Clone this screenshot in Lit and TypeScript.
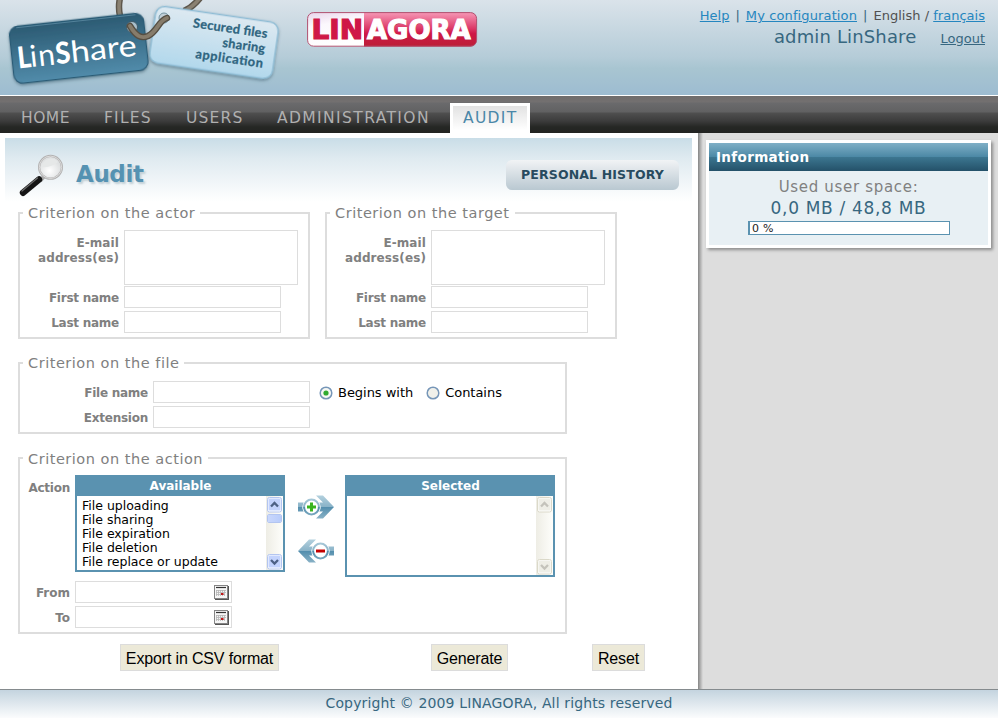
import { LitElement, html, svg, css } from "lit";
import { customElement, property } from "lit/decorators.js";
import { classMap } from "lit/directives/class-map.js";

/** Brand tags hanging from a rope, plus the company badge. */
@customElement("brand-logos")
class BrandLogos extends LitElement {
  static styles = css`
    :host { display: flex; align-items: flex-start; gap: 17px; }
    svg { display: block; }
    .badge { margin-top: 12px; }
    .geo { font-family: Lato, "Open Sans", sans-serif; }
    .heavy { font-family: "DejaVu Sans", sans-serif; font-weight: bold; font-size: 26.5px; }
    .tag { font-weight: 700; font-size: 12.8px; fill: #2f6580; stroke: #2f6580; stroke-width: 0.3px; text-anchor: end; }
  `;
  render() {
    return html`
      <svg width="290" height="95" viewBox="0 0 290 95">
        <defs>
          <linearGradient id="dark" x1="0" y1="0" x2="0" y2="1">
            <stop offset="0" stop-color="#2b5a72" /><stop offset="1" stop-color="#518baa" />
          </linearGradient>
          <linearGradient id="pale" x1="0" y1="0" x2="0" y2="1">
            <stop offset="0" stop-color="#dde9f1" /><stop offset="1" stop-color="#b2d8ec" />
          </linearGradient>
          <filter id="sh" x="-10%" y="-20%" width="120%" height="150%">
            <feDropShadow dx="0" dy="1.5" stdDeviation="1.5" flood-color="#3c5a6c" flood-opacity=".6" />
          </filter>
        </defs>
        <path d="M120 -2 Q118 7 120 16" fill="none" stroke="#5d564b" stroke-width="6.5" />
        <path d="M120 -2 Q118 7 120 16" fill="none" stroke="#8a8172" stroke-width="3.6" />
        <path d="M184 11 Q193 7 200 -2" fill="none" stroke="#5d564b" stroke-width="6.5" />
        <path d="M184 11 Q193 7 200 -2" fill="none" stroke="#8a8172" stroke-width="3.6" />
        <g transform="translate(214 42.5) rotate(8.3)">
          <rect x="-62" y="-28.5" width="124" height="57" rx="9" fill="url(#pale)" stroke="#8fbdd5" stroke-width="1.4" filter="url(#sh)" />
          <text class="geo tag" x="51.5" y="-12" textLength="75">Secured files</text>
          <text class="geo tag" x="51.5" y="3" textLength="43">sharing</text>
          <text class="geo tag" x="51.5" y="18" textLength="68">application</text>
        </g>
        <g transform="translate(78.8 48.3) rotate(-6.2)">
          <rect x="-67.5" y="-28.7" width="135" height="57.4" rx="9" fill="url(#dark)" stroke="#2a5b76" stroke-width="1.2" filter="url(#sh)" />
          <path d="M-60 -27.2H60" stroke="#6e9bb3" stroke-width="1" opacity=".6" />
          <g fill="#fff" class="geo" font-size="30">
            <text x="-62" y="13.5" font-weight="900" textLength="13.5" lengthAdjust="spacingAndGlyphs">L</text>
            <text x="-49.5" y="13.5" textLength="25">in</text>
            <text x="-24" y="13.5" font-weight="900" textLength="15" lengthAdjust="spacingAndGlyphs">S</text>
            <text x="-8.5" y="13.5" textLength="66" lengthAdjust="spacingAndGlyphs">hare</text>
          </g>
        </g>
        <circle cx="132" cy="27" r="5.5" fill="#a9bfcb" stroke="#3f5b69" />
        <circle cx="164" cy="18" r="5" fill="#c0ced6" stroke="#73929f" />
        <path d="M130 26 C136 36 141 39 148 36 C158 31 158 21 167 18" fill="none" stroke="#564f43" stroke-width="6.5" stroke-linecap="round" />
        <path d="M130 26 C136 36 141 39 148 36 C158 31 158 21 167 18" fill="none" stroke="#867c6b" stroke-width="3.8" stroke-linecap="round" />
      </svg>
      <svg class="badge" width="171" height="36" viewBox="0 0 171 36">
        <defs>
          <linearGradient id="red" x1="0" y1="0" x2="0" y2="1">
            <stop offset="0" stop-color="#f79ab8" /><stop offset=".45" stop-color="#dc3a68" />
            <stop offset=".6" stop-color="#cf1746" /><stop offset="1" stop-color="#b92036" />
          </linearGradient>
          <linearGradient id="white" x1="0" y1="0" x2=".3" y2="1">
            <stop offset="0" stop-color="#e8d3ea" /><stop offset=".4" stop-color="#fbf8fd" /><stop offset="1" stop-color="#fff" />
          </linearGradient>
          <clipPath id="round"><rect x=".5" y=".5" width="169" height="34" rx="6" /></clipPath>
        </defs>
        <g clip-path="url(#round)">
          <rect width="57" height="36" fill="url(#white)" />
          <rect x="57" width="114" height="36" fill="url(#red)" />
        </g>
        <rect x=".6" y=".6" width="169" height="33.6" rx="6" fill="none" stroke="#b0506f" />
        <text class="heavy" x="4.5" y="27" fill="#cf1746" stroke="#cf1746" stroke-width="1.2" textLength="51.5" lengthAdjust="spacingAndGlyphs">LIN</text>
        <text class="heavy" x="60.5" y="28" fill="#8b1230" opacity=".7" textLength="103" lengthAdjust="spacingAndGlyphs" aria-hidden="true">AGORA</text>
        <text class="heavy" x="60" y="27" fill="#fff" stroke="#fff" stroke-width="1.2" textLength="103.5" lengthAdjust="spacingAndGlyphs">AGORA</text>
      </svg>`;
  }
}

/** Titled list box with a classic scroll bar. */
@customElement("list-box")
class ListBox extends LitElement {
  @property() heading = "";
  @property({ type: Array }) items: string[] = [];
  @property({ type: Boolean, reflect: true }) disabled = false;

  static styles = css`
    :host { display: block; width: 210px; font-family: "DejaVu Sans", sans-serif; }
    .box { display: flex; flex-direction: column; height: 97px; box-sizing: border-box; border: 2px solid #5a92b0; border-top: 0; background: #fff; }
    .box.tall { height: 102px; }
    .head { height: 21px; line-height: 23px; padding-left: 1px; background: #5a92b0; color: #fff; font-weight: bold; font-size: 12px; text-align: center; }
    .body { flex: 1; display: flex; min-height: 0; }
    ul { flex: 1; margin: 0; padding: 3px 0 0 5px; list-style: none; font-size: 12.5px; line-height: 14px; color: #000; white-space: nowrap; }
    .bar { width: 17px; box-sizing: border-box; background: linear-gradient(90deg, #eeede5, #fefefb); display: flex; flex-direction: column; align-items: center; justify-content: space-between; }
    svg { display: block; }
    .thumb { width: 15px; height: 9px; box-sizing: border-box; border: 1px solid #fff; border-radius: 2px; background: linear-gradient(90deg, #c9d7fc, #b8ccfb); outline: 1px solid #b3c5f0; outline-offset: -1px; margin-top: 1px; }
    .fill { flex: 1; }
  `;

  private arrow(up: boolean) {
    const face = this.disabled ? "#eeeee6" : "#c3d3fd";
    const rim = this.disabled ? "#dbd9c9" : "#b3c5f0";
    const mark = this.disabled ? "#c4c3bb" : "#4d6185";
    return svg`<svg width="17" height="17" viewBox="0 0 17 17">
      <rect x="1.5" y="1.5" width="14" height="14.5" rx="2" fill="#fff" stroke=${rim} />
      <rect x="2.5" y="2.5" width="12" height="12" rx="1" fill=${face} />
      <path d=${up ? "M5 10.5 8.5 7 12 10.5" : "M5 7 8.5 10.5 12 7"} fill="none" stroke=${mark} stroke-width="2.3" />
    </svg>`;
  }

  render() {
    return html`<div class=${classMap({ box: true, tall: this.disabled })}>
      <div class="head">${this.heading}</div>
      <div class="body">
        <ul>${this.items.map((i) => html`<li>${i}</li>`)}</ul>
        <div class="bar">
          ${this.arrow(true)}
          ${this.disabled ? "" : html`<div class="thumb"></div>`}
          <div class="fill"></div>
          ${this.arrow(false)}
        </div>
      </div>
    </div>`;
  }
}

@customElement("app-root")
class AppRoot extends LitElement {
  static styles = css`
    :host { display: flex; flex-direction: column; width: 998px; height: 718px; overflow: hidden; font-family: "DejaVu Sans", sans-serif; font-size: 13px; color: #808080; background: #fff; }
    * { box-sizing: border-box; }
    header { display: flex; justify-content: space-between; height: 96px; border-bottom: 1px solid #fff; background: linear-gradient(#dae3ea, #b5ccd8 60%, #a8c5d1 72%, #9dbcd1); }
    .user { padding: 7px 13px 0 0; text-align: right; color: #376780; }
    .links { display: flex; justify-content: flex-end; gap: 6px; height: 17px; line-height: 17px; }
    .links .conf { letter-spacing: 0.12px; }
    .links .langs { letter-spacing: 0.02px; }
    .who { display: flex; justify-content: flex-end; align-items: center; gap: 24px; height: 26px; line-height: 26px; }
    .name { font-size: 18px; letter-spacing: 0.15px; }
    a { color: #2586bf; text-decoration: underline; }
    .logout { color: #376780; padding-top: 3px; }
    .lang { color: #505050; }
    nav { display: grid; grid-template-columns: 83px 82px 91px 173px 80px; align-items: end; height: 37px; padding-left: 21px; background: linear-gradient(#6f6c6c 0, #737070 6px, #6a6a6c 7px, #616162 16px, #4f4f4f 17px, #3c3c3c 25px, #252724 31px, #222321); color: #b0b0b0; font-size: 15.5px; letter-spacing: 0.5px; }
    nav span { height: 30px; line-height: 30px; white-space: nowrap; }
    nav .mid-gap { letter-spacing: 1.2px; }
    nav .wide { letter-spacing: 1.4px; }
    nav .on { letter-spacing: 1.3px; color: #4a87a8; border: 3px solid #fff; border-bottom: 0; background: linear-gradient(#e2e2e2, #fff 90%); padding-left: 10px; line-height: 24px; }
    .mid { display: flex; height: 556px; background: #dddddd; }
    main { width: 698px; background: #fff; padding: 5px 6px 0 5px; }
    .edge { width: 5px; background: linear-gradient(90deg, #858585, #a9a9a9 40%, #d4d4d4 90%, #ddd); }
    .panel { padding: 0 13px; background: linear-gradient(#c9dde7, #dfeaf0 20px, #fff 64px); }
    .top { display: flex; align-items: flex-start; height: 67px; }
    .lens { margin: 14px 0 0 0; }
    h1 { margin: 21px auto 0 10px; font-size: 23px; line-height: 30px; letter-spacing: -0.4px; color: #5592b2; text-shadow: 2px 2px 2px #c3d0d7; }
    .history { margin-top: 22px; width: 173px; height: 30px; border: 0; border-radius: 6px; background: linear-gradient(#f1f3f5, #b9c8d1); color: #284b5f; font: bold 12.5px "DejaVu Sans", sans-serif; line-height: 28px; letter-spacing: 0.15px; padding: 0 0 1px; white-space: nowrap; }
    form { display: flex; flex-direction: column; gap: 16px; }
    .pair { display: flex; gap: 15px; }
    fieldset { margin: 0; padding: 9px 0 0; border: 2px solid #dddddd; width: 549px; height: 79px; min-width: 0; }
    .pair fieldset { width: 292px; height: 134px; }
    fieldset.action { height: 184px; }
    legend { margin-left: 3px; padding: 0 5px; height: 16px; line-height: 16px; font-size: 14.5px; letter-spacing: 0.52px; white-space: nowrap; }
    .action legend { line-height: 18px; }
    .grid { display: grid; justify-content: start; grid-template-columns: 99px auto; column-gap: 5px; row-gap: 3px; }
    .file { grid-template-columns: 128px auto auto; padding-top: 1px; }
    label { font-weight: bold; font-size: 12px; line-height: 15px; letter-spacing: -0.25px; text-align: right; padding-top: 5px; }
    .mail { padding-top: 6px; padding-left: 10px; letter-spacing: 0.1px; }
    .field { width: 157px; height: 22px; border: 1px solid #dddddd; background: #fff; }
    .area { width: 174px; height: 55px; margin-bottom: -2px; border: 1px solid #dddddd; background: #fff; }
    .radios { display: flex; align-items: center; color: #000; font-size: 13px; padding: 0 0 0 4px; height: 22px; white-space: nowrap; }
    .radios svg { flex: none; margin-top: 2px; }
    .radios span { margin: 0 13px 0 5px; letter-spacing: -0.03px; }
    .act { display: grid; grid-template-columns: 55px 210px 60px 210px; column-gap: 0; }
    .act label { padding: 6px 5px 0 0; }
    .arrows { display: flex; flex-direction: column; align-items: center; gap: 20px; padding: 20px 0 0 2px; }
    .dates { display: grid; grid-template-columns: 55px 157px; row-gap: 3px; margin-top: 4px; }
    .dates label { padding-right: 5px; letter-spacing: 0; }
    .dates .field { display: flex; justify-content: flex-end; padding: 3px 2px 0 0; }
    .buttons { display: flex; margin-top: 10px; padding-left: 102px; }
    .btn { height: 27px; padding: 0; border: 1px solid #dcdcdc; background: #ece9d8; color: #000; font: 16px "Liberation Sans", sans-serif; line-height: 27px; white-space: nowrap; letter-spacing: -0.15px; }
    .csv { width: 159px; }
    .gen { width: 77px; margin-left: 152px; }
    .reset { width: 53px; margin-left: 84px; }
    aside { padding: 7px 0 0 3px; }
    .info { width: 285px; height: 108px; border: 3px solid #fff; background: #e8f0f4; box-shadow: 2px 2px 3px #8c8c8c; text-align: center; }
    .info h2 { margin: 0; height: 28px; padding-left: 7px; text-align: left; color: #fff; font-size: 13.5px; line-height: 28px; letter-spacing: 0.35px; background: linear-gradient(#7fafc6, #4b88a5 50%, #3c7690 51%, #245169); }
    .used { margin-top: 7px; height: 19px; line-height: 19px; font-size: 15px; letter-spacing: 0.68px; }
    .size { height: 23px; line-height: 23px; font-size: 17px; color: #376780; letter-spacing: 0.68px; }
    .meter { width: 202px; height: 14px; margin: 1px 0 0 39px; border: 1px solid #5a92b0; border-left-width: 2px; background: #fff; color: #222; text-align: left; padding-left: 2px; font-size: 11px; letter-spacing: 0.2px; line-height: 13px; }
    footer { height: 29px; border-top: 1px solid #858b8e; background: linear-gradient(#c4d4df, #fbfcfd); text-align: center; color: #376780; font-size: 14px; line-height: 27px; letter-spacing: 0.14px; }
  `;

  private person(title: string) {
    return html`<fieldset>
      <legend>${title}</legend>
      <div class="grid">
        <label class="mail">E-mail address(es)</label><div class="area"></div>
        <label>First name</label><div class="field"></div>
        <label>Last name</label><div class="field"></div>
      </div>
    </fieldset>`;
  }

  private radio(on: boolean) {
    return html`<svg width="14" height="14" viewBox="0 0 14 14">
      <circle cx="7" cy="7" r="5.8" fill=${on ? "#f5f7f3" : "#f0f0ea"} stroke="#7696b8" stroke-width="1.5" />
      ${on ? svg`<circle cx="7" cy="7" r="2.6" fill="#2faa2f" />` : ""}
    </svg>`;
  }

  private calendar() {
    return html`<svg width="15" height="15" viewBox="0 0 15 15">
      <path d="M1 14.2H14.2V1" fill="none" stroke="#555" stroke-width="1.6" />
      <rect x=".5" y=".5" width="13" height="13" fill="#f6f6f6" stroke="#858585" />
      <path d="M2 2.5H12" stroke="#333" stroke-width="1.2" />
      <path d="M2.5 5V11M4.5 5V11M6.5 5V11M8.5 5V11M10.5 5V11M2 5.5H12M2 7.5H12M2 9.5H11" stroke="#b5b5b5" stroke-width=".8" />
      <rect x="7" y="8" width="2.5" height="2" fill="#c01818" />
    </svg>`;
  }

  private move(add: boolean) {
    const id = add ? "ga" : "gr";
    const cx = add ? 13.5 : 22.5;
    return html`<svg width="36" height="24" viewBox="0 0 36 24">
      <defs><linearGradient id=${id} gradientUnits="userSpaceOnUse" x1="0" y1="0" x2="0" y2="24">
        <stop offset="0" stop-color="#b5d2df" /><stop offset=".48" stop-color="#8ab3c8" />
        <stop offset=".52" stop-color="#558fae" /><stop offset="1" stop-color="#8bb3c7" />
      </linearGradient></defs>
      <path fill="url(#${id})" d=${add
        ? "M0 7.5H25L18 .5H25L36 12 25 23.5H18L25 16.5H0Z"
        : "M36 7.5H11L18 .5H11L0 12 11 23.5H18L11 16.5H36Z"} />
      <circle cx=${cx} cy="12" r="9.2" fill="#fff" />
      <circle cx=${cx} cy="12" r="7.4" fill="#fff" stroke=${`url(#${id})`} stroke-width="2" />
      ${add
        ? svg`<path d="M9 12H18M13.5 7.5V16.5" stroke="#3bb420" stroke-width="3" />`
        : svg`<path d="M18 12H27" stroke="#c40000" stroke-width="3" />`}
    </svg>`;
  }

  private lens() {
    return html`<svg class="lens" width="48" height="46" viewBox="0 0 48 46">
      <defs>
        <radialGradient id="glass" cx=".45" cy=".65"><stop offset="0" stop-color="#fff" /><stop offset="1" stop-color="#dfe1e2" /></radialGradient>
      </defs>
      <path d="M22 29 26 24.5" stroke="#aaa" stroke-width="4" />
      <path d="M5 40.8 21 27.5" stroke="#151515" stroke-width="6.4" stroke-linecap="round" />
      <path d="M4 39 19.5 26" stroke="#6d6d6d" stroke-width="1.2" stroke-linecap="round" />
      <circle cx="32.5" cy="15.3" r="11.4" fill="url(#glass)" stroke="#b2b1b1" stroke-width="2.2" />
      <circle cx="32.5" cy="15.3" r="11.2" fill="none" stroke="#ececec" stroke-width=".7" />
      <path d="M24 15 A9 9 0 0 1 40 10 Q33 16 24 15Z" fill="#e6e8e8" />
    </svg>`;
  }

  render() {
    return html`
      <header>
        <brand-logos></brand-logos>
        <div class="user">
          <div class="links"><a>Help</a><span>|</span><a class="conf">My configuration</a><span>|</span><span class="langs"><span class="lang">English / </span><a>français</a></span></div>
          <div class="who"><span class="name">admin LinShare</span><a class="logout">Logout</a></div>
        </div>
      </header>
      <nav><span>HOME</span><span class="mid-gap">FILES</span><span class="mid-gap">USERS</span><span class="wide">ADMINISTRATION</span><span class="on">AUDIT</span></nav>
      <div class="mid">
        <main>
          <div class="panel">
            <div class="top">
              ${this.lens()}
              <h1>Audit</h1>
              <button class="history">PERSONAL HISTORY</button>
            </div>
            <form>
              <div class="pair">
                ${this.person("Criterion on the actor")}
                ${this.person("Criterion on the target")}
              </div>
              <fieldset>
                <legend>Criterion on the file</legend>
                <div class="grid file">
                  <label>File name</label><div class="field"></div>
                  <div class="radios">${this.radio(true)}<span>Begins with</span>${this.radio(false)}<span>Contains</span></div>
                  <label>Extension</label><div class="field"></div>
                </div>
              </fieldset>
              <fieldset class="action">
                <legend>Criterion on the action</legend>
                <div class="act">
                  <label>Action</label>
                  <list-box heading="Available" .items=${["File uploading", "File sharing", "File expiration", "File deletion", "File replace or update"]}></list-box>
                  <div class="arrows">${this.move(true)}${this.move(false)}</div>
                  <list-box heading="Selected" disabled></list-box>
                </div>
                <div class="dates">
                  <label>From</label><div class="field">${this.calendar()}</div>
                  <label>To</label><div class="field">${this.calendar()}</div>
                </div>
              </fieldset>
            </form>
            <div class="buttons">
              <button class="btn csv">Export in CSV format</button>
              <button class="btn gen">Generate</button>
              <button class="btn reset">Reset</button>
            </div>
          </div>
        </main>
        <div class="edge"></div>
        <aside>
          <section class="info">
            <h2>Information</h2>
            <div class="used">Used user space:</div>
            <div class="size">0,0 MB / 48,8 MB</div>
            <div class="meter">0 %</div>
          </section>
        </aside>
      </div>
      <footer>Copyright © 2009 LINAGORA, All rights reserved</footer>`;
  }
}
